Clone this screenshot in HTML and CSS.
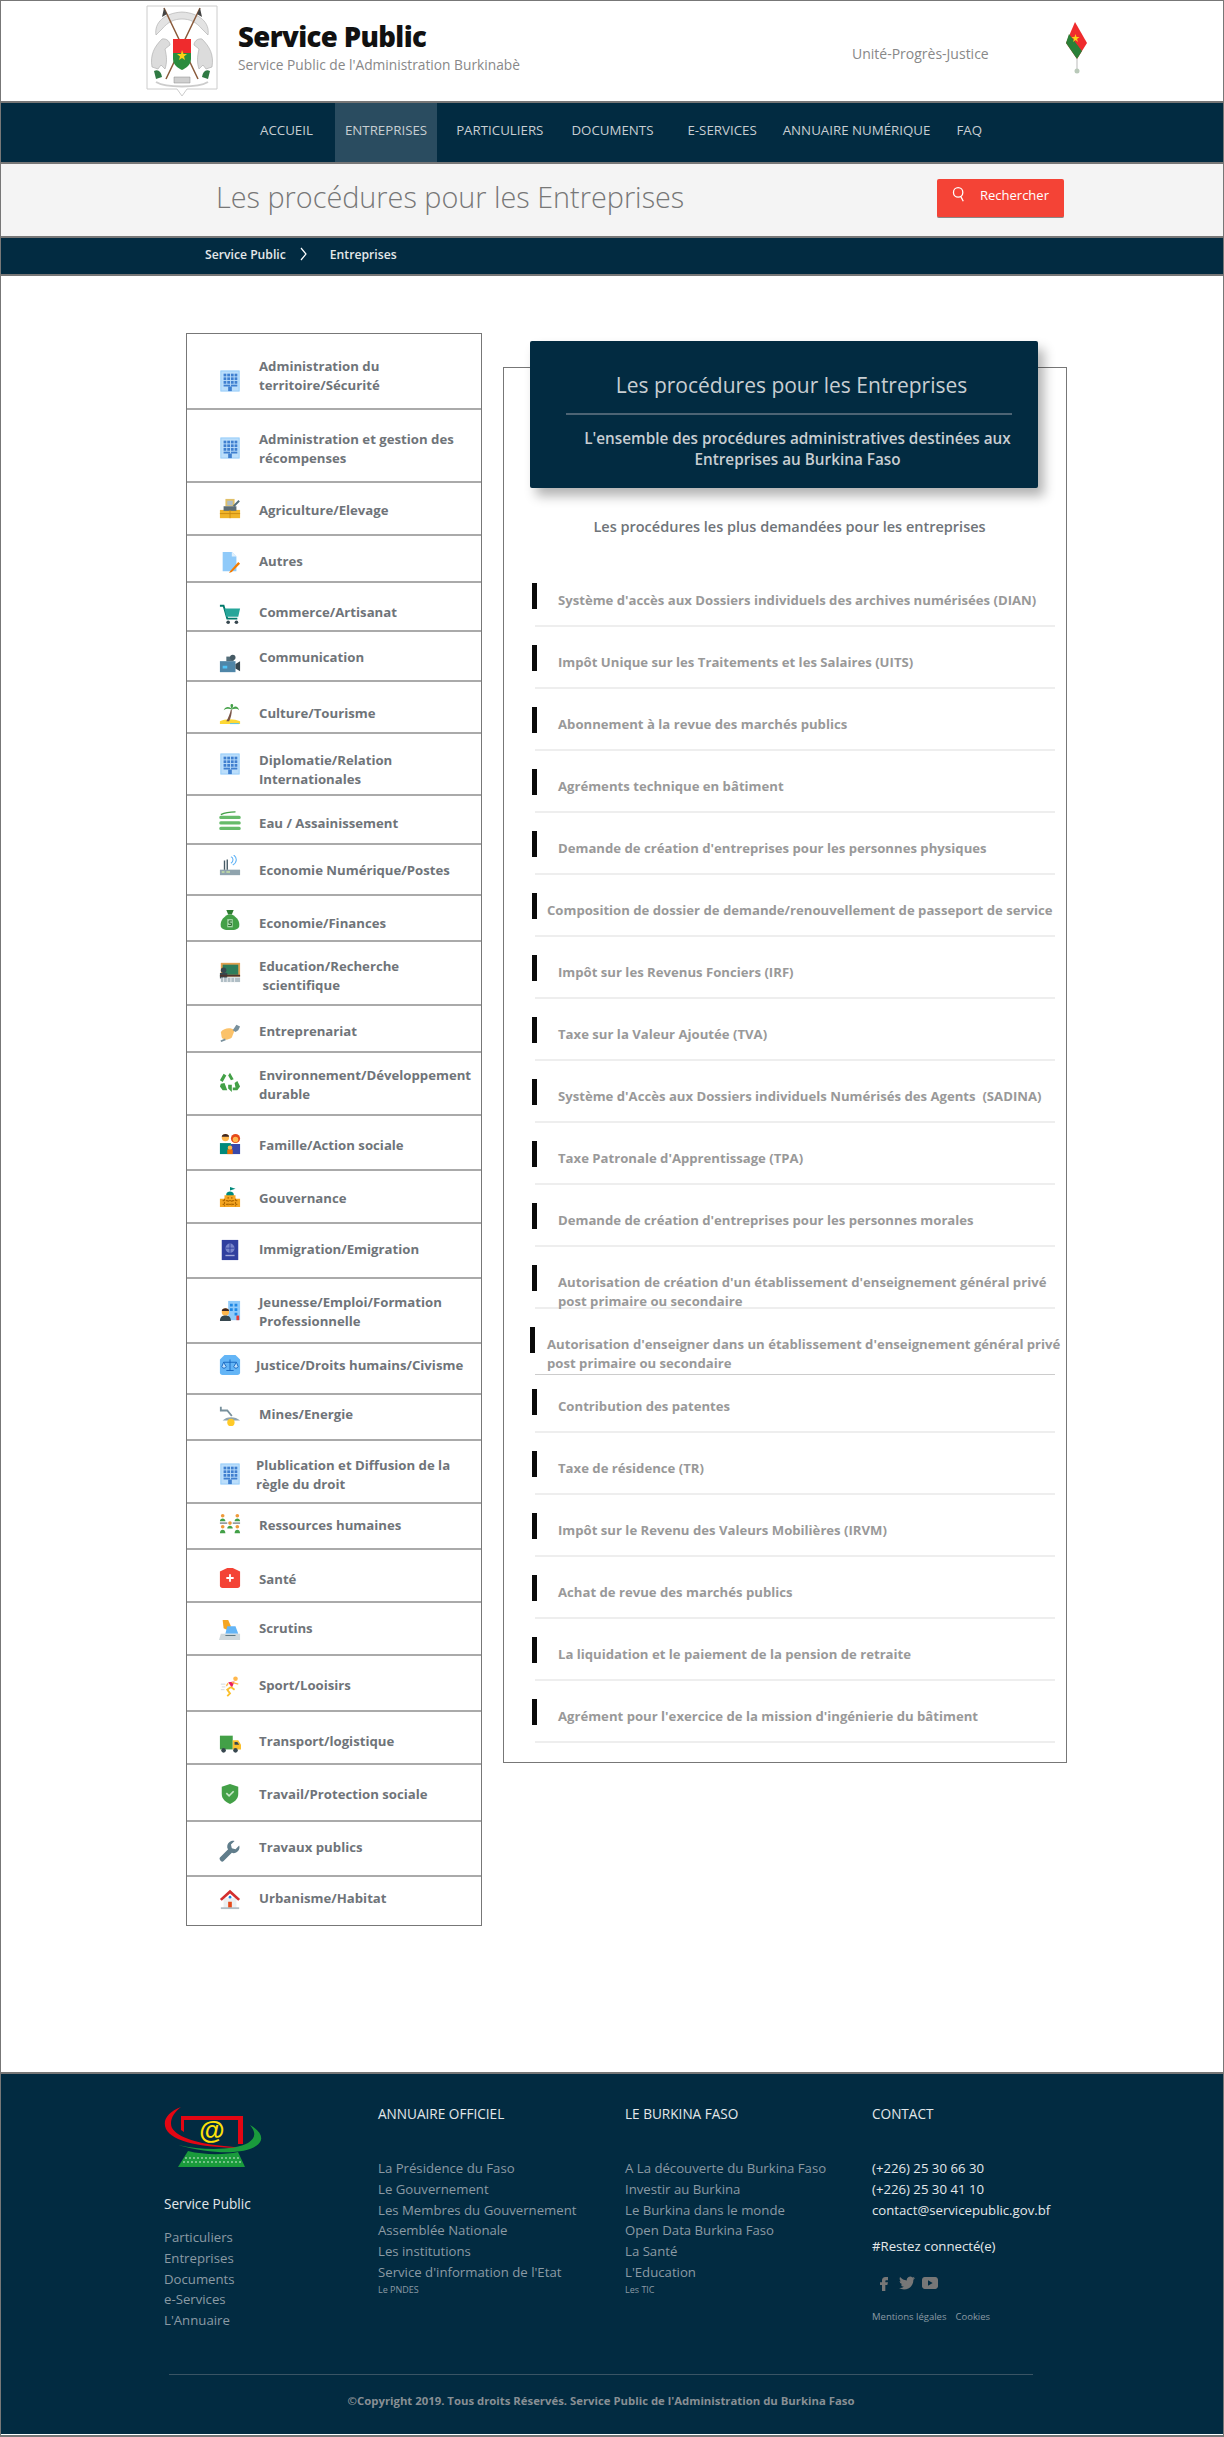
FILE: index.html
```html
<!DOCTYPE html>
<html lang="fr">
<head>
  <meta charset="UTF-8" />
  <title>Service Public - Les procédures pour les Entreprises</title>
  <meta name="viewport" content="width=device-width, initial-scale=1.0" />
  <link rel="stylesheet" href="styles.css">
</head>
<body>

  <svg class="defs" width="0" height="0">
    <symbol id="i-building" viewBox="0 0 22 24">
      <rect x="1" y="1" width="20" height="22" fill="#bbdefb" stroke="#90caf9"/>
      <g fill="#3f7fcf">
        <rect x="4" y="4" width="3" height="3"/><rect x="8" y="4" width="3" height="3"/><rect x="12" y="4" width="3" height="3"/><rect x="16" y="4" width="3" height="3"/>
        <rect x="4" y="8" width="3" height="3"/><rect x="8" y="8" width="3" height="3"/><rect x="12" y="8" width="3" height="3"/><rect x="16" y="8" width="3" height="3"/>
        <rect x="4" y="12" width="3" height="3"/><rect x="8" y="12" width="3" height="3"/><rect x="12" y="12" width="3" height="3"/><rect x="16" y="12" width="3" height="3"/>
        <rect x="4" y="16" width="7" height="2"/><rect x="12" y="16" width="7" height="2"/>
        <rect x="9" y="18" width="4" height="5"/>
      </g>
    </symbol>
  </svg>

  <div class="page">

    <header class="top">
      <svg class="emblem" viewBox="0 0 72 92">
        <path d="M1 1H71V84H41L36 91L31 84H1Z" fill="#fff" stroke="#ccc"/>
        <path d="M10 30C8 18 18 8 36 7C54 8 64 18 62 30L56 24C50 17 44 14 36 14C28 14 22 17 16 24Z" fill="#e3e3e3" stroke="#aaa" stroke-width=".6"/>
        <path d="M18 3L52 74M54 3L20 74" stroke="#8a5a3a" stroke-width="1.5"/>
        <path d="M18 3L16 12L21 9ZM54 3L56 12L51 9Z" fill="#444"/>
        <path d="M27 34H45V48H27Z" fill="#ef2b2d"/>
        <path d="M27 48H45V54C45 60 40 63 36 65C32 63 27 60 27 54Z" fill="#2a8c3e"/>
        <path d="M36 45L37.5 49H41L38 51.5L39 55L36 53L33 55L34 51.5L31 49H35Z" fill="#fcd116"/>
        <path d="M6 62C4 50 8 42 16 34C21 33 24 37 24 40L19 44C21 52 21 58 19 64L15 60L12 64Z" fill="#dcdcdc" stroke="#a8a8a8" stroke-width=".6"/>
        <path d="M66 62C68 50 64 42 56 34C51 33 48 37 48 40L53 44C51 52 51 58 53 64L57 60L60 64Z" fill="#dcdcdc" stroke="#a8a8a8" stroke-width=".6"/>
        <path d="M8 66C12 64 15 66 16 72L10 74ZM64 66C60 64 57 66 56 72L62 74Z" fill="#2f7a43"/>
        <path d="M28 72H44V78H28Z" fill="#cfcfcf" stroke="#888" stroke-width=".5"/>
        <path d="M10 77C20 83 52 83 62 77" fill="none" stroke="#ccc" stroke-width="2"/>
      </svg>
      <div class="brand">
        <div class="brand-name">Service Public</div>
        <div class="brand-sub">Service Public de l'Administration Burkinabè</div>
      </div>
      <div class="motto">Unité-Progrès-Justice</div>
      <svg class="flag" viewBox="0 0 25 54">
        <path d="M11 0L23 21L13 37L2 21Z" fill="#ef2b2d"/>
        <path d="M2 21L5 12L18 29L13 37Z" fill="#2a8038"/>
        <path d="M11.500 12L12.500 15H15.500L13 17L14 20L11.500 18L9 20L10 17L7.500 15H10.500Z" fill="#fcd116"/>
        <path d="M13 37V47" stroke="#bbb"/>
        <circle cx="13" cy="49" r="2.500" fill="#b9c9b9"/>
      </svg>
    </header>

    <nav class="mainnav">
      <a href="#">ACCUEIL</a>
      <a href="#" class="active">ENTREPRISES</a>
      <a href="#">PARTICULIERS</a>
      <a href="#">DOCUMENTS</a>
      <a href="#">E-SERVICES</a>
      <a href="#">ANNUAIRE NUMÉRIQUE</a>
      <a href="#">FAQ</a>
    </nav>

    <section class="hero">
      <h1>Les procédures pour les Entreprises</h1>
      <button class="search-btn">
        <svg viewBox="0 0 16 20" width="14" height="17"><circle cx="7" cy="7.500" r="5.500" fill="none" stroke="#fff" stroke-width="1.500"/><path d="M10 12L13 18" stroke="#fff" stroke-width="1.500"/></svg>
        Rechercher
      </button>
    </section>

    <div class="crumbs">
      <a href="#">Service Public</a>
      <svg viewBox="0 0 8 14" width="8" height="14"><path d="M1 1L6 7L1 13" fill="none" stroke="#fff" stroke-width="1.200"/></svg>
      <a href="#">Entreprises</a>
    </div>

    <main class="content">

      <ul class="cats">
        <li class="cat"><svg class="cat-icon"><use href="#i-building"/></svg><a href="#">Administration du<br>territoire/Sécurité</a></li>
        <li class="cat"><svg class="cat-icon"><use href="#i-building"/></svg><a href="#">Administration et gestion des<br>récompenses</a></li>
        <li class="cat"><svg class="cat-icon" viewBox="0 0 24 24"><path d="M7 1H17V9H7Z" fill="#e0c068"/><path d="M9 3H15V8H9Z" fill="#b0bec5"/><path d="M16 9L22 3" stroke="#546e7a" stroke-width="2"/><path d="M1 13H23V22H1Z" fill="#f0b429"/><path d="M5 9H19V14H5Z" fill="#5d6d75"/><path d="M1 17H23M12 13V22" stroke="#c98a10"/></svg><a href="#">Agriculture/Elevage</a></li>
        <li class="cat"><svg class="cat-icon" viewBox="0 0 24 24"><path d="M4 1H14L19 6V22H4Z" fill="#90caf9"/><path d="M14 1V6H19Z" fill="#e3f2fd"/><path d="M12 22L21 12L23 14L14 23L11 24Z" fill="#f57c00"/></svg><a href="#">Autres</a></li>
        <li class="cat"><svg class="cat-icon" viewBox="0 0 24 24"><path d="M1 3H5L9 17H20" fill="none" stroke="#00796b" stroke-width="2"/><path d="M6 6H23L21 15H8Z" fill="#26a69a"/><circle cx="10" cy="21" r="2" fill="#37474f"/><circle cx="19" cy="21" r="2" fill="#37474f"/></svg><a href="#">Commerce/Artisanat</a></li>
        <li class="cat"><svg class="cat-icon" viewBox="0 0 24 24"><path d="M1 10H18V22H1Z" fill="#4f86a8"/><path d="M8 5H16V10H8Z" fill="#546e7a"/><circle cx="15" cy="6" r="3" fill="#455a64"/><path d="M18 13L23 10V21L18 18Z" fill="#37474f"/><path d="M4 15H9V18H4Z" fill="#4fc3f7"/></svg><a href="#">Communication</a></li>
        <li class="cat"><svg class="cat-icon" viewBox="0 0 24 24"><path d="M1 20C6 17 17 17 23 20V23H1Z" fill="#fdd835"/><path d="M12 22H22V23H12Z" fill="#4fc3f7"/><path d="M13 7C12 12 10 16 8 20H11C13 16 14 12 14 7Z" fill="#795548"/><path d="M14 7C11 3 7 4 5 8C8 6 11 6 14 7ZM14 7C16 2 21 3 22 8C20 6 17 6 14 7ZM14 7C12 3 12 1 14 1C16 1 16 3 14 7Z" fill="#43a047"/></svg><a href="#">Culture/Tourisme</a></li>
        <li class="cat"><svg class="cat-icon"><use href="#i-building"/></svg><a href="#">Diplomatie/Relation<br>Internationales</a></li>
        <li class="cat"><svg class="cat-icon" viewBox="0 0 24 24"><path d="M2 7H22M2 13H22M2 19H22" stroke="#66bb6a" stroke-width="3.500" stroke-linecap="round"/><path d="M2 4C6 2 12 1 18 1" fill="none" stroke="#43a047" stroke-width="1.500"/></svg><a href="#">Eau / Assainissement</a></li>
        <li class="cat"><svg class="cat-icon" viewBox="0 0 24 24"><path d="M1 16H23V22H1Z" fill="#90a4ae" /><path d="M6 6V16M9 5V16" stroke="#455a64" stroke-width="1.500"/><path d="M13 2C16 3 16 7 13 9M16 0C20 3 20 8 15 11" fill="none" stroke="#64b5f6" stroke-width="1.200"/><path d="M3 18.500H6M8 18.500H12" stroke="#c5e1a5" stroke-width="1.500"/></svg><a href="#">Economie Numérique/Postes</a></li>
        <li class="cat"><svg class="cat-icon" viewBox="0 0 24 24"><path d="M8 1H16L14 6H10Z" fill="#2e7d32"/><path d="M10 6H14C20 9 23 14 22 19C21 22 18 23 12 23C6 23 3 22 2 19C1 14 4 9 10 6Z" fill="#43a047"/><path d="M9 11H15V20H9Z" fill="#a5d6a7"/><path d="M14 13H11V15.500H13.500V18H10" fill="none" stroke="#1b5e20"/></svg><a href="#">Economie/Finances</a></li>
        <li class="cat"><svg class="cat-icon" viewBox="0 0 24 24"><path d="M2 2H23V17H2Z" fill="#e0a050"/><path d="M4 4H21V15H4Z" fill="#2e7d5b"/><circle cx="5" cy="10" r="3" fill="#37474f"/><path d="M1 13H9V19H1Z" fill="#37474f"/><path d="M1 15H23V17H1Z" fill="#4e342e"/><path d="M2 18H23V23H2Z" fill="#b0bec5"/><path d="M5 18V23M9 18V23M13 18V23M17 18V23" stroke="#eceff1"/></svg><a href="#">Education/Recherche<br>&nbsp;scientifique</a></li>
        <li class="cat"><svg class="cat-icon" viewBox="0 0 24 24"><path d="M2 11C6 6 13 6 17 9L14 17C10 20 5 20 3 17Z" fill="#fbc26a"/><path d="M15 9L19 3L23 5L21 9L18 11Z" fill="#78909c"/><path d="M2 21L7 19" stroke="#78909c" stroke-width="2"/></svg><a href="#">Entreprenariat</a></li>
        <li class="cat"><svg class="cat-icon" viewBox="0 0 24 24"><path d="M12 2L16 9L13 10L10 5ZM8 5L4 12L1 10L5 3ZM20 11L23 17L20 21H15V18H18L17 13ZM2 14L6 13L9 21H4L1 17ZM10 15L14 15V23L10 19Z" fill="#43a047"/></svg><a href="#">Environnement/Développement<br>durable</a></li>
        <li class="cat"><svg class="cat-icon" viewBox="0 0 24 24"><circle cx="7" cy="5" r="4" fill="#ffb74d"/><path d="M3 4C3 0 11 0 11 4Z" fill="#3e2723"/><path d="M1 11H13V23H1Z" fill="#00897b"/><circle cx="18" cy="6" r="5" fill="#e64a19"/><circle cx="18" cy="7" r="3" fill="#ffb74d"/><path d="M13 12H23V23H13Z" fill="#3949ab"/><circle cx="12" cy="16" r="2.500" fill="#ffb74d"/><path d="M9 18H15V23H9Z" fill="#ef6c00"/></svg><a href="#">Famille/Action sociale</a></li>
        <li class="cat"><svg class="cat-icon" viewBox="0 0 24 24"><path d="M12 1L18 3L12 5Z" fill="#00897b"/><path d="M8 9C8 5 16 5 16 9V11H8Z" fill="#00897b"/><path d="M6 10H18V14H23V23H1V14H6Z" fill="#f5a623"/><path d="M4 16H20M4 20H20M6 14V22M10 12V22M14 12V22M18 14V22" stroke="#b26a00" stroke-width="1.300" stroke-dasharray="2 1.500"/></svg><a href="#">Gouvernance</a></li>
        <li class="cat"><svg class="cat-icon" viewBox="0 0 24 24"><path d="M3 1H21V23H3Z" fill="#303f9f"/><circle cx="12" cy="10" r="5" fill="#7986cb"/><path d="M7 10H17M12 5V15" stroke="#303f9f"/><path d="M7 18H17" stroke="#9fa8da" stroke-width="1.500"/></svg><a href="#">Immigration/Emigration</a></li>
        <li class="cat"><svg class="cat-icon" viewBox="0 0 24 24"><path d="M10 1H23V22H10Z" fill="#90caf9"/><path d="M12 4H15V7H12ZM17 4H20V7H17ZM12 9H15V12H12ZM17 9H20V12H17ZM17 14H20V17H17Z" fill="#1e88e5"/><path d="M19 17H22V22H19Z" fill="#e53935"/><circle cx="7" cy="13" r="4" fill="#ffb74d"/><path d="M3 12C3 8 11 8 11 12Z" fill="#3e2723"/><path d="M1 23C1 18 4 17 7 17C10 17 13 18 13 23Z" fill="#37474f"/></svg><a href="#">Jeunesse/Emploi/Formation<br>Professionnelle</a></li>
        <li class="cat cat-left"><svg class="cat-icon" viewBox="0 0 24 24"><path d="M6 1H18L23 6V20C23 22 22 23 20 23H4C2 23 1 22 1 20V6Z" fill="#64b5f6"/><path d="M12 6V18M5 9H19M3 14L5 9L8 14C7 16 4 16 3 14ZM16 14L19 9L21 14C20 16 17 16 16 14ZM8 18H16" fill="#bbdefb" stroke="#1565c0"/></svg><a href="#">Justice/Droits humains/Civisme</a></li>
        <li class="cat"><svg class="cat-icon" viewBox="0 0 24 24"><path d="M2 2V6H9L14 12" fill="none" stroke="#78909c" stroke-width="2"/><path d="M4 17C8 12 18 12 23 17Z" fill="#90a4ae"/><circle cx="13" cy="19" r="4" fill="#ffca28"/></svg><a href="#">Mines/Energie</a></li>
        <li class="cat cat-left"><svg class="cat-icon"><use href="#i-building"/></svg><a href="#">Plublication et Diffusion de la<br>règle du droit</a></li>
        <li class="cat"><svg class="cat-icon" viewBox="0 0 24 24"><g fill="#ef9a3a"><circle cx="4" cy="3" r="2"/><circle cx="20" cy="3" r="2"/><circle cx="12" cy="11" r="2"/><circle cx="4" cy="15" r="2"/><circle cx="20" cy="15" r="2"/></g><g fill="#43a047"><path d="M1 9C1 5 7 5 7 9ZM17 9C17 5 23 5 23 9ZM9 17C9 13 15 13 15 17ZM1 22C1 17 7 17 7 22ZM17 22C17 17 23 17 23 22Z"/></g><path d="M1 11H9M15 11H23" stroke="#37474f"/></svg><a href="#">Ressources humaines</a></li>
        <li class="cat"><svg class="cat-icon" viewBox="0 0 24 24"><path d="M9 1H15L23 5V20C23 22 22 23 20 23H4C2 23 1 22 1 20V5Z" fill="#f44336"/><path d="M11 8H13V11H16V13H13V16H11V13H8V11H11Z" fill="#fff"/></svg><a href="#">Santé</a></li>
        <li class="cat"><svg class="cat-icon" viewBox="0 0 24 24"><path d="M4 1H10L13 8L9 12L5 10Z" fill="#f5a623"/><path d="M9 8H18L21 16H7Z" fill="#64b5f6"/><path d="M2 16H23V23H0Z" fill="#cfd8dc"/><path d="M7 18H18" stroke="#546e7a"/></svg><a href="#">Scrutins</a></li>
        <li class="cat"><svg class="cat-icon" viewBox="0 0 24 24"><circle cx="18" cy="4" r="2.500" fill="#ffb74d"/><path d="M10 8L17 7L14 14Z" fill="#e91e63"/><path d="M14 8L21 10M10 9L8 12" stroke="#ffb74d" stroke-width="1.500"/><path d="M13 13L9 16L12 20L9 23M13 13L17 16" fill="none" stroke="#fbc02d" stroke-width="2"/><path d="M2 10H7M3 13H7M2 16H6" stroke="#cfd8dc"/></svg><a href="#">Sport/Looisirs</a></li>
        <li class="cat"><svg class="cat-icon" viewBox="0 0 24 24"><path d="M1 4H15V19H1Z" fill="#43a047"/><path d="M15 9H21L24 14V19H15Z" fill="#fbc02d"/><path d="M17 11H20L22 14H17Z" fill="#37474f"/><circle cx="5" cy="20" r="2.500" fill="#37474f"/><circle cx="18" cy="20" r="2.500" fill="#37474f"/></svg><a href="#">Transport/logistique</a></li>
        <li class="cat"><svg class="cat-icon" viewBox="0 0 24 24"><path d="M12 1L21 4V12C21 18 16 21 12 23C8 21 3 18 3 12V4Z" fill="#43a047"/><path d="M8 11L11 14L16 9" fill="none" stroke="#c8e6c9" stroke-width="1.800"/></svg><a href="#">Travail/Protection sociale</a></li>
        <li class="cat"><svg class="cat-icon" viewBox="0 0 24 24"><path d="M22 6L18 10L14 9L13 5L17 1C13 0 9 3 9 7C9 8 9 9 10 10L1 19C0 20 1 22 2 23C3 24 4 24 5 23L14 14C18 16 24 11 22 6Z" fill="#607d8b"/></svg><a href="#">Travaux publics</a></li>
        <li class="cat"><svg class="cat-icon" viewBox="0 0 24 24"><path d="M5 11H19V22H5Z" fill="#eceff1"/><path d="M12 2L23 12L21 14L12 6L3 14L1 12Z" fill="#d32f2f"/><path d="M10 15H14V22H10Z" fill="#e64a19"/><circle cx="12" cy="10" r="1.500" fill="#1e88e5"/><path d="M2 22H22" stroke="#b0bec5" stroke-width="2"/></svg><a href="#">Urbanisme/Habitat</a></li>
      </ul>

      <section class="panel">
        <div class="panel-head">
          <h2>Les procédures pour les Entreprises</h2>
          <p>L'ensemble des procédures administratives destinées aux Entreprises au Burkina Faso</p>
        </div>
        <h3>Les procédures les plus demandées pour les entreprises</h3>
        <ul class="procs">
          <li><a href="#">Système d'accès aux Dossiers individuels des archives numérisées (DIAN)</a></li>
          <li><a href="#">Impôt Unique sur les Traitements et les Salaires (UITS)</a></li>
          <li><a href="#">Abonnement à la revue des marchés publics</a></li>
          <li><a href="#">Agréments technique en bâtiment</a></li>
          <li><a href="#">Demande de création d'entreprises pour les personnes physiques</a></li>
          <li class="wide"><a href="#">Composition de dossier de demande/renouvellement de passeport de service</a></li>
          <li><a href="#">Impôt sur les Revenus Fonciers (IRF)</a></li>
          <li><a href="#">Taxe sur la Valeur Ajoutée (TVA)</a></li>
          <li><a href="#">Système d'Accès aux Dossiers individuels Numérisés des Agents &nbsp;(SADINA)</a></li>
          <li><a href="#">Taxe Patronale d'Apprentissage (TPA)</a></li>
          <li><a href="#">Demande de création d'entreprises pour les personnes morales</a></li>
          <li><a href="#">Autorisation de création d'un établissement d'enseignement général privé<br>post primaire ou secondaire</a></li>
          <li class="wide two"><a href="#">Autorisation d'enseigner dans un établissement d'enseignement général privé<br>post primaire ou secondaire</a></li>
          <li><a href="#">Contribution des patentes</a></li>
          <li><a href="#">Taxe de résidence (TR)</a></li>
          <li><a href="#">Impôt sur le Revenu des Valeurs Mobilières (IRVM)</a></li>
          <li><a href="#">Achat de revue des marchés publics</a></li>
          <li><a href="#">La liquidation et le paiement de la pension de retraite</a></li>
          <li><a href="#">Agrément pour l'exercice de la mission d'ingénierie du bâtiment</a></li>
        </ul>
      </section>

    </main>

    <footer class="foot">
      <div class="foot-cols">
        <div class="foot-col col-logo">
          <svg class="foot-logo" viewBox="0 0 100 62">
            <path d="M17 1C4 6 -2 14 2 23C8 36 40 42 80 42L60 40C36 38 14 32 8 22C5 15 9 7 17 1Z" fill="#e30613"/>
            <path d="M17 10H79V38L74 38V14H20V26L17 24Z" fill="#e30613"/>
            <path d="M86 19C98 26 101 34 92 40C80 48 50 49 14 39C40 45 72 44 84 37C92 32 92 26 86 19Z" fill="#1a9b3c"/>
            <path d="M14 61L24 45C40 49 60 49 74 46L81 61Z" fill="#1a9b3c"/>
            <path d="M21 52H76M19 56H78" stroke="#cfe8d4" stroke-width="1" stroke-dasharray="2 2"/>
            <text x="48" y="33" text-anchor="middle" class="at">@</text>
          </svg>
          <h4 class="foot-site">Service Public</h4>
          <a href="#">Particuliers</a>
          <a href="#">Entreprises</a>
          <a href="#">Documents</a>
          <a href="#">e-Services</a>
          <a href="#">L'Annuaire</a>
        </div>
        <div class="foot-col col-links">
          <h4>ANNUAIRE OFFICIEL</h4>
          <a href="#">La Présidence du Faso</a>
          <a href="#">Le Gouvernement</a>
          <a href="#">Les Membres du Gouvernement</a>
          <a href="#">Assemblée Nationale</a>
          <a href="#">Les institutions</a>
          <a href="#">Service d'information de l'Etat</a>
          <a href="#" class="tiny">Le PNDES</a>
        </div>
        <div class="foot-col col-links">
          <h4>LE BURKINA FASO</h4>
          <a href="#">A La découverte du Burkina Faso</a>
          <a href="#">Investir au Burkina</a>
          <a href="#">Le Burkina dans le monde</a>
          <a href="#">Open Data Burkina Faso</a>
          <a href="#">La Santé</a>
          <a href="#">L'Education</a>
          <a href="#" class="tiny">Les TIC</a>
        </div>
        <div class="foot-col col-links col-contact">
          <h4>CONTACT</h4>
          <a href="#">(+226) 25 30 66 30</a>
          <a href="#">(+226) 25 30 41 10</a>
          <a href="#">contact@servicepublic.gov.bf</a>
          <div class="restez">#Restez connecté(e)</div>
          <div class="social">
            <svg viewBox="0 0 24 24" width="16" height="20"><path d="M14 8h4V3h-4c-3 0-5 2-5 5v3H6v4h3v9h5v-9h3l1-4h-4V9c0-.6.4-1 1-1z"/></svg>
            <svg viewBox="0 0 24 24" width="16" height="16"><path d="M23.950 4.570a10 10 0 01-2.820.770 4.960 4.960 0 002.160-2.720c-.950.550-2 .960-3.120 1.190a4.920 4.920 0 00-8.380 4.480C7.690 8.090 4.070 6.130 1.640 3.160a4.820 4.820 0 00-.670 2.480c0 1.710.870 3.210 2.190 4.100a4.900 4.900 0 01-2.230-.610v.060a4.920 4.920 0 003.950 4.830 5 5 0 01-2.210.080 4.940 4.940 0 004.600 3.420A9.870 9.870 0 010 19.540a14 14 0 007.560 2.210c9.050 0 14-7.500 14-14 0-.210 0-.420-.020-.630A9.940 9.940 0 0024 4.590z"/></svg>
            <svg viewBox="0 0 24 24" width="16" height="16"><path fill-rule="evenodd" d="M4 3H20C22 3 24 5 24 7V17C24 19 22 21 20 21H4C2 21 0 19 0 17V7C0 5 2 3 4 3ZM9 8V16L16 12Z"/></svg>
          </div>
          <div class="legal"><a href="#">Mentions légales</a><a href="#">Cookies</a></div>
        </div>
      </div>
      <div class="copyright">©Copyright 2019. Tous droits Réservés. Service Public de l'Administration du Burkina Faso</div>
    </footer>

  </div>

</body>
</html>
```

FILE: styles.css
```css
* {
  box-sizing: border-box;
}

body {
  margin: 0;
  font-family: "Open Sans", "Noto Sans", sans-serif;
  background: #fff;
}

a {
  color: inherit;
  text-decoration: none;
}

ul {
  list-style: none;
  margin: 0;
  padding: 0;
}

.defs {
  position: absolute;
}

.page {
  border: 1px solid #777;
  border-bottom-width: 2px;
  height: 2437px;
}

/* top bar */
.top {
  display: flex;
  height: 102px;
  padding: 4px 0 0 145px;
  border-bottom: 2px solid #777;
}

.emblem {
  width: 72px;
  height: 92px;
}

.brand {
  margin: 13px 0 0 20px;
  width: 614px;
}

.brand-name {
  font-size: 27.500px;
  font-weight: 800;
  line-height: 38px;
  color: #111;
  letter-spacing: -0.6px;
}

.brand-sub {
  font-size: 13.750px;
  line-height: 18px;
  color: #888;
}

.motto {
  margin-top: 40px;
  width: 212px;
  font-size: 14px;
  line-height: 18px;
  color: #888;
}

.flag {
  width: 25px;
  height: 54px;
  margin-top: 17px;
}

/* main menu */
.mainnav {
  display: flex;
  height: 61px;
  padding: 0 0 0 249px;
  background: #022b41;
  border-bottom: 2px solid #777;
}

.mainnav a {
  display: flex;
  align-items: center;
  padding: 0 10px 5px;
  font-size: 13.300px;
  color: #c8ced2;
  white-space: nowrap;
}

.mainnav a:nth-child(2) { margin-left: 12px; }
.mainnav a:nth-child(3) { margin-left: 9px; }
.mainnav a:nth-child(4) { margin-left: 8px; }
.mainnav a:nth-child(5) { margin-left: 14px; }
.mainnav a:nth-child(6) { margin-left: 6px; }
.mainnav a:nth-child(7) { margin-left: 6px; }

.mainnav a.active {
  background: #2a4c60;
}

/* page title */
.hero {
  display: flex;
  align-items: center;
  justify-content: space-between;
  height: 74px;
  padding: 0 159px 4px 215px;
  background: #f4f4f4;
  border-bottom: 2px solid #777;
}

.hero h1 {
  margin: 0 0 3px;
  font-size: 28.800px;
  font-weight: 300;
  color: #777;
}

.search-btn {
  display: flex;
  align-items: center;
  gap: 14px;
  width: 127px;
  height: 39px;
  padding: 0 0 6px 15px;
  border: 0;
  border-bottom: 1px solid #888;
  border-radius: 2px;
  background: #f44336;
  color: #fff;
  font-family: inherit;
  font-size: 13px;
}

.crumbs {
  display: flex;
  align-items: center;
  height: 38px;
  padding: 0 0 4px 204px;
  background: #022b41;
  border-bottom: 2px solid #777;
  font-size: 12.200px;
  font-weight: 600;
  color: #e4e8ea;
}

.crumbs svg {
  margin: 0 22px 0 14px;
}

/* categories and procedures */
.content {
  display: flex;
  align-items: flex-start;
  padding: 57px 0 0 185px;
  height: 1796px;
}

.cats {
  width: 296px;
  border: 1px solid #777;
}

.cat {
  display: flex;
  align-items: flex-start;
  border-bottom: 2px solid #aaa;
  font-size: 13.200px;
  font-weight: 700;
  line-height: 19px;
  color: #6f7479;
}

.cat:last-child {
  border-bottom: 0;
}

.cat-icon {
  flex: none;
  width: 22px;
  height: 22px;
  margin: var(--icon-top) 0 0 32px;
}

.cat a {
  margin: var(--text-top) 0 0 18px;
  white-space: nowrap;
}

.cat-left a {
  margin-left: 15px;
}

.cat:nth-child(1)  { height: 76px; --icon-top: 36px; --text-top: 23px; }
.cat:nth-child(2)  { height: 73px; --icon-top: 27px; --text-top: 20px; }
.cat:nth-child(3)  { height: 53px; --icon-top: 15px; --text-top: 18px; }
.cat:nth-child(4)  { height: 47px; --icon-top: 15px; --text-top: 16px; }
.cat:nth-child(5)  { height: 49px; --icon-top: 20px; --text-top: 20px; }
.cat:nth-child(6)  { height: 50px; --icon-top: 20px; --text-top: 16px; }
.cat:nth-child(7)  { height: 52px; --icon-top: 21px; --text-top: 22px; }
.cat:nth-child(8)  { height: 62px; --icon-top: 19px; --text-top: 17px; }
.cat:nth-child(9)  { height: 49px; --icon-top: 15px; --text-top: 18px; }
.cat:nth-child(10) { height: 51px; --icon-top: 10px; --text-top: 16px; }
.cat:nth-child(11) { height: 46px; --icon-top: 13px; --text-top: 18px; }
.cat:nth-child(12) { height: 64px; --icon-top: 19px; --text-top: 15px; }
.cat:nth-child(13) { height: 47px; --icon-top: 16px; --text-top: 16px; }
.cat:nth-child(14) { height: 63px; --icon-top: 18px; --text-top: 13px; }
.cat:nth-child(15) { height: 55px; --icon-top: 17px; --text-top: 20px; }
.cat:nth-child(16) { height: 53px; --icon-top: 15px; --text-top: 18px; }
.cat:nth-child(17) { height: 55px; --icon-top: 15px; --text-top: 16px; }
.cat:nth-child(18) { height: 65px; --icon-top: 21px; --text-top: 14px; }
.cat:nth-child(19) { height: 51px; --icon-top: 10px; --text-top: 12px; }
.cat:nth-child(20) { height: 46px; --icon-top: 10px; --text-top: 10px; }
.cat:nth-child(21) { height: 63px; --icon-top: 22px; --text-top: 15px; }
.cat:nth-child(22) { height: 46px; --icon-top: 9px;  --text-top: 12px; }
.cat:nth-child(23) { height: 53px; --icon-top: 17px; --text-top: 20px; }
.cat:nth-child(24) { height: 53px; --icon-top: 16px; --text-top: 16px; }
.cat:nth-child(25) { height: 56px; --icon-top: 19px; --text-top: 20px; }
.cat:nth-child(26) { height: 53px; --icon-top: 20px; --text-top: 20px; }
.cat:nth-child(27) { height: 57px; --icon-top: 18px; --text-top: 20px; }
.cat:nth-child(28) { height: 55px; --icon-top: 18px; --text-top: 16px; }
.cat:nth-child(29) { height: 48px; --icon-top: 11px; --text-top: 12px; }

.panel {
  width: 564px;
  height: 1396px;
  margin: 34px 0 0 21px;
  border: 1px solid #777;
}

.panel-head {
  width: 508px;
  height: 147px;
  margin: -27px 0 0 26px;
  padding: 30px 26px 0 36px;
  background: #022b41;
  border-radius: 2px;
  box-shadow: 6px 8px 12px rgba(0, 0, 0, 0.3);
  color: #c8ced2;
  text-align: center;
}

.panel-head h2 {
  margin: 0;
  padding: 0 0 13px 5px;
  border-bottom: 2px solid #4d6474;
  font-size: 21px;
  font-weight: 400;
  line-height: 29px;
}

.panel-head p {
  margin: 13px -21px 0 -4px;
  font-size: 15.300px;
  font-weight: 600;
  line-height: 21px;
}

.panel h3 {
  margin: 28px 0 0 0;
  padding-left: 9px;
  text-align: center;
  font-size: 14.500px;
  font-weight: 600;
  line-height: 21px;
  color: #6f7479;
}

.procs {
  margin: 47px 0 0 31px;
}

.procs li {
  position: relative;
  height: 43px;
  margin: 0 11px 19px 0;
  padding: 7px 0 0 23px;
  border-bottom: 2px solid #eee;
  font-size: 13.150px;
  font-weight: 700;
  line-height: 19px;
  color: #999;
  white-space: nowrap;
}

/* the black tick left of each procedure */
.procs li::before {
  content: "";
  position: absolute;
  left: -3px;
  top: -1px;
  width: 5px;
  height: 26px;
  background: #0a0a0a;
}

.procs li.wide {
  padding-left: 12px;
}

.procs li.two {
  height: 47px;
  margin-bottom: 15px;
  border-bottom: 1px solid #ccc;
}

.procs li.two::before {
  left: -5px;
}

/* footer */
.foot {
  height: 362px;
  background: #022b41;
  border-top: 2px solid #777;
  padding: 30px 0 0 163px;
}

.foot-cols {
  display: flex;
  height: 270px;
}

.foot-col a {
  display: block;
  font-size: 13.200px;
  line-height: 20.800px;
  color: #8b9aa4;
  white-space: nowrap;
}

.foot-col h4 {
  margin: 0 0 34px;
  font-size: 13.600px;
  font-weight: 400;
  line-height: 20px;
  color: #e4e8ea;
}

.col-logo {
  width: 214px;
}

.foot-logo {
  display: block;
  width: 100px;
  height: 62px;
  margin: 2px 0 26px;
}

.foot-logo .at {
  font-family: "Liberation Sans", sans-serif;
  font-size: 26px;
  font-weight: 700;
  fill: #fde10a;
}

.col-logo h4.foot-site {
  margin: 0 0 13px;
}

.col-links {
  width: 247px;
}

.foot-col a.tiny {
  font-size: 9px;
  line-height: 13px;
}

.col-contact a {
  color: #e4e8ea;
}

.restez {
  margin-top: 16px;
  font-size: 13.200px;
  line-height: 20px;
  color: #e4e8ea;
}

.social {
  display: flex;
  align-items: center;
  gap: 7px;
  margin: 17px 0 0 4px;
  fill: #777;
}

.legal {
  display: flex;
  gap: 9px;
  margin-top: 17px;
}

.col-contact .legal a {
  font-size: 9.500px;
  line-height: 13px;
  color: #8b9aa4;
}

.copyright {
  margin: 0 28px 0 5px;
  width: 864px;
  padding-top: 17px;
  border-top: 1px solid #3a5464;
  text-align: center;
  font-size: 11.350px;
  font-weight: 700;
  line-height: 18px;
  color: #888f94;
}
```
